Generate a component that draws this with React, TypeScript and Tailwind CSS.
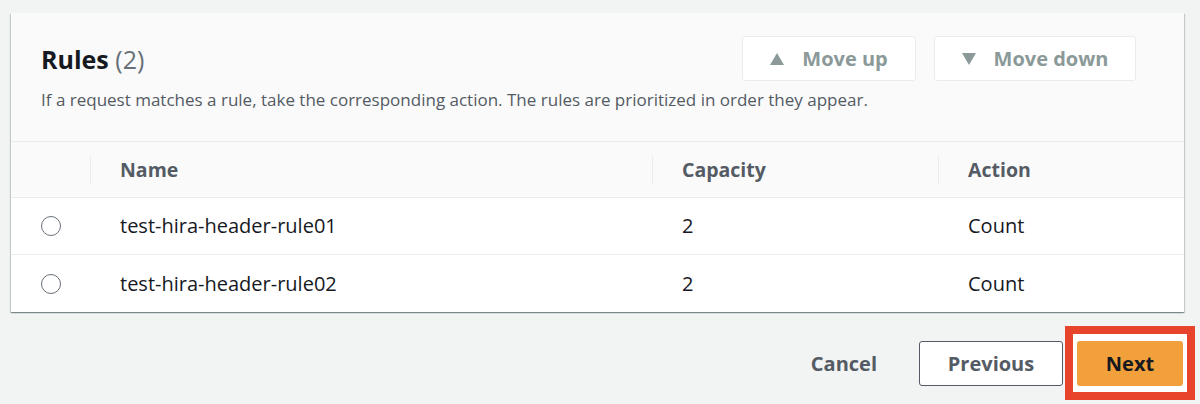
const rules = [
  { name: "test-hira-header-rule01", capacity: 2, action: "Count" },
  { name: "test-hira-header-rule02", capacity: 2, action: "Count" },
];

function Triangle({ dir }: { dir: "up" | "down" }) {
  return (
    <svg width="14" height="12" viewBox="0 0 14 12" className="fill-current">
      {dir === "up" ? <polygon points="7,0 14,12 0,12" /> : <polygon points="0,0 14,0 7,12" />}
    </svg>
  );
}

function Radio() {
  return <span className="block h-[20px] w-[20px] rounded-full border-[1.5px] border-[#687078] bg-white" />;
}

export default function App() {
  return (
    <div className="h-[404px] w-[1200px] overflow-hidden bg-[#f2f3f3] pt-[13px] font-['Open_Sans',sans-serif]">
      <div className="ml-[11px] w-[1173px] bg-white shadow-[0_1px_1px_0_rgba(0,28,36,0.3),1px_1px_1px_0_rgba(0,28,36,0.15),-1px_1px_1px_0_rgba(0,28,36,0.15)]">
        <div className="h-[129px] border-b border-[#eaeded] bg-[#fafafa] pl-[30px] pr-[48px] pt-[23px]">
          <div className="flex h-[45px] items-center justify-between">
            <h2 className="text-[25px] font-bold leading-[32px] text-[#16191f]">
              Rules <span className="font-normal text-[#687078]">(2)</span>
            </h2>
            <div className="flex gap-[18px]">
              <button className="flex h-[45px] w-[174px] items-center justify-center gap-[18px] rounded-[3px] border border-[#e9ebed] bg-white text-[20px] font-bold text-[#8b9999]">
                <Triangle dir="up" />
                Move up
              </button>
              <button className="flex h-[45px] w-[202px] items-center justify-center gap-[18px] rounded-[3px] border border-[#e9ebed] bg-white text-[20px] font-bold text-[#8b9999]">
                <Triangle dir="down" />
                Move down
              </button>
            </div>
          </div>
          <p className="mt-[9px] text-[17px] leading-[20px] text-[#545b64]">
            If a request matches a rule, take the corresponding action. The rules are prioritized in order they appear.
          </p>
        </div>

        <div className="flex h-[56px] items-center border-b border-[#eaeded] bg-[#fafafa] text-[19.5px] font-bold text-[#545b64]">
          <div className="w-[79px]" />
          <div className="flex h-[28px] w-[562px] items-center border-l border-[#eaeded] pl-[29px]">Name</div>
          <div className="flex h-[28px] w-[286px] items-center border-l border-[#eaeded] pl-[29px]">Capacity</div>
          <div className="flex h-[28px] flex-1 items-center border-l border-[#eaeded] pl-[29px]">Action</div>
        </div>

        {rules.map((r, i) => (
          <div
            key={r.name}
            className={`flex h-[57px] items-center text-[20px] text-[#16191f] ${i < rules.length - 1 ? "border-b border-[#eaeded]" : ""}`}
          >
            <div className="flex w-[79px] justify-center">
              <Radio />
            </div>
            <div className="w-[562px] pl-[30px]">{r.name}</div>
            <div className="w-[286px] pl-[30px]">{r.capacity}</div>
            <div className="flex-1 pl-[30px]">{r.action}</div>
          </div>
        ))}
      </div>

      <div className="mr-[5px] mt-[14px] flex items-start justify-end">
        <button className="mr-[42px] mt-[15px] h-[45px] text-[20px] font-bold text-[#545b64]">Cancel</button>
        <button className="mr-[2px] mt-[15px] h-[45px] w-[144px] rounded-[3px] border border-[#545b64] bg-white text-[20px] font-bold text-[#545b64]">
          Previous
        </button>
        <div className="border-[8px] border-[#e8432b] bg-white px-[4px] pb-[6px] pt-[7px]">
          <button className="h-[45px] w-[106px] rounded-[3px] bg-[#f2a03c] text-[20px] font-bold text-[#16191f]">Next</button>
        </div>
      </div>
    </div>
  );
}
